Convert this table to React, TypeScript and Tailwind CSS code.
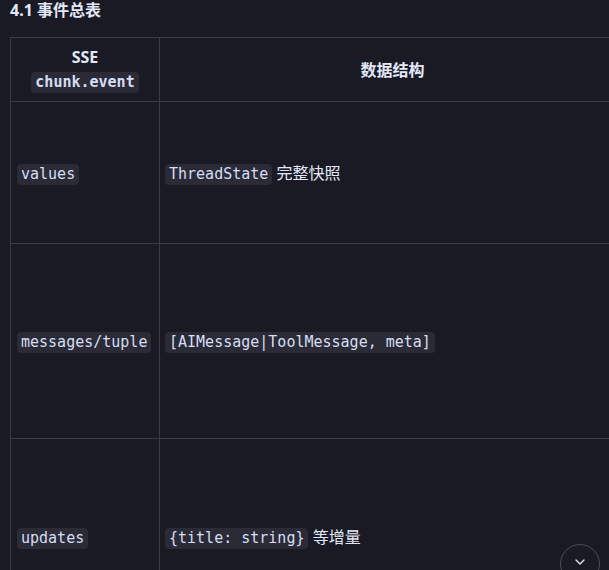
import React from "react";

const mono = "font-['DejaVu_Sans_Mono','Liberation_Mono',monospace]";

const Code: React.FC<{ children: React.ReactNode }> = ({ children }) => (
	<code className={`${mono} inline-block rounded-[4px] bg-[#2a2b37] px-[4px] py-[1px] text-[15px] leading-[19px] text-[#d6def2]`}>
		{children}
	</code>
);

const rows = [
	{ h: "h-[142px]", key: "values", data: <><Code>ThreadState</Code> 完整快照</> },
	{ h: "h-[195px]", key: "messages/tuple", data: <Code>[AIMessage|ToolMessage, meta]</Code> },
	{ h: "h-[196px]", key: "updates", data: <><Code>{"{title: string}"}</Code> 等增量</> },
];

export default function App() {
	return (
		<div className="relative h-[570px] w-[609px] overflow-hidden bg-[#1a1a24] font-['Noto_Sans','Noto_Sans_CJK_SC',sans-serif] text-[#e3e8f8]">
			<h3 className="px-[10px] pt-[1px] text-[16px] font-bold leading-[18px]">4.1 事件总表</h3>
			<div className="pl-[10px] pt-[18px]">
				<table className="w-[640px] table-fixed border-collapse text-[16px]">
					<colgroup>
						<col className="w-[149px]" />
						<col />
					</colgroup>
					<thead>
						<tr className="h-[64px]">
							<th className="border border-[#3a3b45] px-[6px] text-center align-middle font-bold">
								<div className="leading-[22px]">SSE</div>
								<div className="mt-[1px]">
									<Code><span className="font-bold">chunk.event</span></Code>
								</div>
							</th>
							<th className="border border-[#3a3b45] pr-[24px] text-center align-middle font-bold">数据结构</th>
						</tr>
					</thead>
					<tbody>
						{rows.map((r) => (
							<tr key={r.key} className={r.h}>
								<td className="border border-[#3a3b45] px-[6px] align-middle">
									<Code>{r.key}</Code>
								</td>
								<td className="border border-[#3a3b45] px-[5px] align-middle">{r.data}</td>
							</tr>
						))}
					</tbody>
				</table>
			</div>
			<button className="absolute left-[560px] top-[544px] flex h-[40px] w-[40px] items-center justify-center rounded-full border border-[#4a4b55] bg-[#1a1a24] text-[#d6def2]">
				<svg width="16" height="16" viewBox="0 0 24 24" fill="none" stroke="currentColor" strokeWidth="2.2" strokeLinecap="round" strokeLinejoin="round" className="-mt-[4px]">
					<path d="M6 9l6 6 6-6" />
				</svg>
			</button>
		</div>
	);
}
